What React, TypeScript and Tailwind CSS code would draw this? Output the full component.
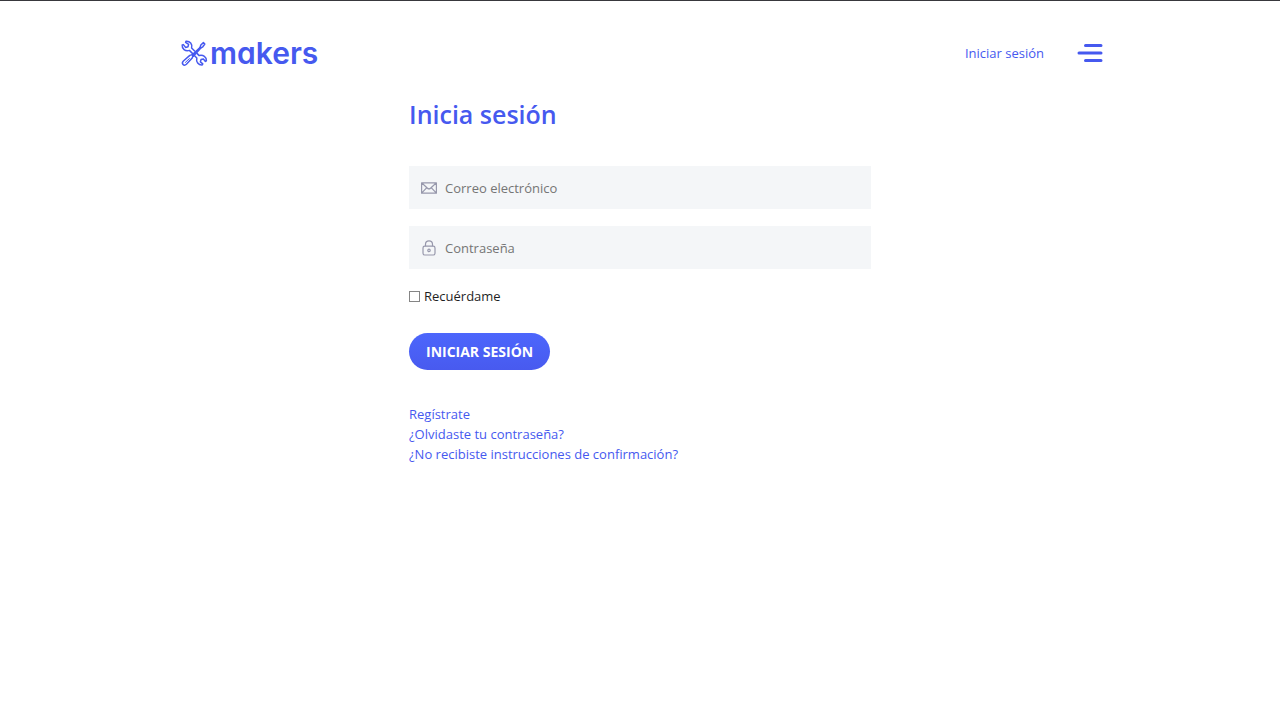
import type { ReactNode } from 'react';

function ToolsIcon() {
  return (
    <svg className="size-7 shrink-0" viewBox="0 0 28 28" fill="none" stroke="currentColor" strokeWidth="1.5" strokeLinejoin="round" strokeLinecap="round" aria-hidden="true">
      <path d="M12.4 14.4 L9.4 11.4 C5.2 12.6 1.8 9.8 2.2 6 L3.4 5.6 L5.6 8.4 L8 7.8 L8.6 5.4 L5.6 3.4 L6 2.2 C9.8 1.8 12.8 5 11.6 9 L14.6 12 M14.6 16.8 L16.8 19 C15.8 23 18.4 26.2 22.2 26 L22.8 24.8 L20.4 22.8 L21 20.6 L23.4 20 L25.4 22.4 L26.4 21.8 C26.6 18 23.2 15.6 19.2 16.6 L17 14.4" />
      <path d="M12.2 15.8 L20 8.6 L20.6 9.2 L13.4 17.2 Z" fill="currentColor" />
      <path d="M20 8.6 L20.8 6 L23.4 3.6 L24.8 5 L22.8 7.8 L20.6 9.2 Z" />
      <path d="M9.8 16.4 L3.4 22 C1 24.4 3.8 27.8 6.4 25.2 L12.2 19 L13.4 15.4 Z" />
      <path d="M5.4 23.4 L9.4 19.6" strokeWidth="1" />
    </svg>
  );
}

function MailIcon() {
  return (
    <svg className="h-3 w-4 shrink-0" viewBox="0 0 16 12" fill="none" stroke="currentColor" strokeWidth="1.2" strokeLinejoin="round" aria-hidden="true">
      <path d="M.6 .8 H15.4 V11.2 H.6 Z M.6 .8 L6.5 6.2 C7.4 7 8.6 7 9.5 6.2 L15.4 .8 M.6 11.2 L5.8 5.7 M15.4 11.2 L10.2 5.7" />
    </svg>
  );
}

function LockIcon() {
  return (
    <svg className="h-4 w-4 shrink-0" viewBox="0 0 16 16" fill="none" stroke="currentColor" strokeWidth="1.2" aria-hidden="true">
      <rect x="2" y="6.2" width="12" height="8.8" rx="1.8" />
      <path d="M4.5 6.2 V4.3 A3.5 3.5 0 0 1 11.5 4.3 V6.2" />
      <circle cx="8" cy="10.4" r="1.2" />
    </svg>
  );
}

type FieldProps = { id: string; type: string; label: string; icon: ReactNode };

function Field({ id, type, label, icon }: FieldProps) {
  return (
    <div className="flex h-[43px] items-center gap-2 bg-[#f4f6f8] pl-3 text-[#9798ac]">
      <label htmlFor={id} aria-label={label}>{icon}</label>
      <input id={id} type={type} placeholder={label} aria-label={label} className="min-w-0 flex-1 bg-transparent py-2 text-[13px] leading-6 text-[#202124] placeholder:text-[#757575] focus:outline-none" />
    </div>
  );
}

export default function App() {
  return (
    <div className="min-h-screen border-t border-[#38383d] bg-white font-['Open_Sans','Noto_Sans',sans-serif] text-[13px] leading-5 text-[#4659ef]">
      <header className="mx-auto flex h-[103px] max-w-[926px] items-center justify-between pl-[3px]">
        <a href="#" className="flex items-center gap-0.5">
          <ToolsIcon />
          <span className="font-['Inter',sans-serif] text-[30px] leading-8 font-semibold [font-feature-settings:'cv11']">makers</span>
        </a>
        <div className="flex items-center gap-8">
          <a href="#">Iniciar sesión</a>
          <button type="button" aria-label="Menú">
            <svg className="h-5 w-[27px]" viewBox="0 0 27 20" fill="none" stroke="currentColor" strokeWidth="3" strokeLinecap="round" aria-hidden="true">
              <path d="M9.5 2.5 H25 M3 10 H25 M9.5 17.5 H25" />
            </svg>
          </button>
        </div>
      </header>

      <main className="mx-auto max-w-[462px]">
        <h1 className="text-[25px] leading-5 font-semibold">Inicia sesión</h1>
        <form className="pt-[42px]" onSubmit={(event) => event.preventDefault()}>
          <div className="flex flex-col gap-[17px]">
            <Field id="email" type="email" label="Correo electrónico" icon={<MailIcon />} />
            <Field id="password" type="password" label="Contraseña" icon={<LockIcon />} />
          </div>
          <div className="mt-[17px] flex items-center gap-1 text-[#1f1f1f]">
            <input id="remember" type="checkbox" className="size-[11px] appearance-none border border-[#858585] bg-white checked:bg-[#4659ef]" />
            <label htmlFor="remember">Recuérdame</label>
          </div>
          <button type="submit" className="mt-[27px] h-[37px] rounded-full bg-linear-to-b from-[#4c66fc] to-[#485aef] px-[17px] text-sm font-bold text-white">INICIAR SESIÓN</button>
        </form>
        <nav className="mt-[34px] flex flex-col items-start">
          <a href="#">Regístrate</a>
          <a href="#">¿Olvidaste tu contraseña?</a>
          <a href="#">¿No recibiste instrucciones de confirmación?</a>
        </nav>
      </main>
    </div>
  );
}
